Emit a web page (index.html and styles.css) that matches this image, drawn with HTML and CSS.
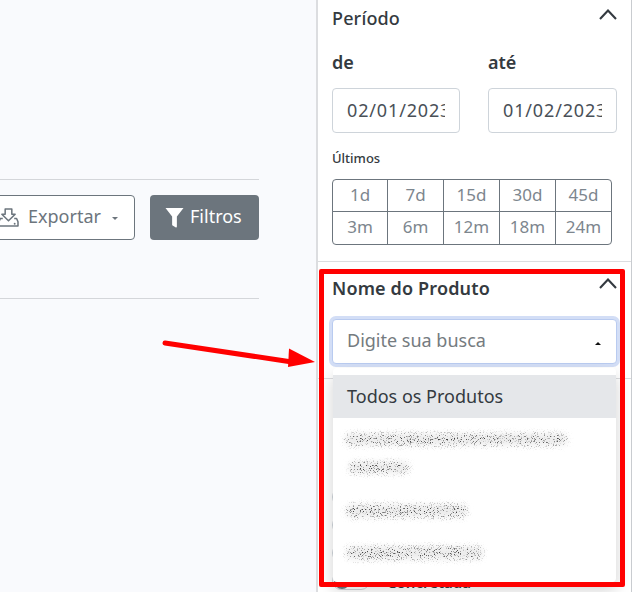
FILE: index.html
```html
<!DOCTYPE html>
<html lang="pt-BR">
<head>
<meta charset="utf-8">
<title>Filtros</title>
<link rel="stylesheet" href="styles.css">
</head>
<body>
<div class="page">
  <main class="main">
    <div class="toolbar">
      <button class="btn btn-outline">
        <svg class="icon" viewBox="0 0 22 20" width="21" height="19"><path d="M7.500 1h7v5.500h3.500L11 13.500 4 6.500h3.500z" fill="none" stroke="#6c757d" stroke-width="1.600" stroke-linejoin="round"/><path d="M5 11H2.500L1 14.500v4.500h20v-4.500L19.500 11H17" fill="none" stroke="#6c757d" stroke-width="1.600" stroke-linejoin="round"/><circle cx="17.500" cy="16.500" r="1" fill="#6c757d"/></svg>
        <span>Exportar</span>
        <i class="caret-down"></i>
      </button>
      <button class="btn btn-solid">
        <svg class="icon" viewBox="0 0 20 22" width="19" height="21"><path d="M0.500 1h19L12.500 10v10.500a1 1 0 0 1-1.500.8L8 19.500a1 1 0 0 1-.5-.8V10z" fill="#fff"/></svg>
        <span>Filtros</span>
      </button>
    </div>
  </main>

  <aside class="sidebar">
    <section class="panel panel-period">
      <header class="panel-head">
        <h2 class="panel-title">Período</h2>
        <svg class="chevron" viewBox="0 0 18 11" width="18" height="11"><path d="M1 10l8-8.500 8 8.500" fill="none" stroke="#343a40" stroke-width="2.100"/></svg>
      </header>
      <div class="dates">
        <label class="date-field"><span class="date-label">de</span><input class="date-input" type="text" value="02/01/2023"></label>
        <label class="date-field"><span class="date-label">até</span><input class="date-input" type="text" value="01/02/2023"></label>
      </div>
      <p class="last-label">Últimos</p>
      <div class="ranges">
        <span class="range">1d</span><span class="range">7d</span><span class="range">15d</span><span class="range">30d</span><span class="range">45d</span>
        <span class="range">3m</span><span class="range">6m</span><span class="range">12m</span><span class="range">18m</span><span class="range">24m</span>
      </div>
    </section>

    <section class="panel panel-product">
      <header class="panel-head">
        <h2 class="panel-title panel-title-strong">Nome do Produto</h2>
        <svg class="chevron" viewBox="0 0 18 11" width="18" height="11"><path d="M1 10l8-8.500 8 8.500" fill="none" stroke="#343a40" stroke-width="2.100"/></svg>
      </header>
      <div class="combo">
        <div class="combo-input">
          <span class="placeholder">Digite sua busca</span>
          <i class="caret-up"></i>
        </div>
        <div class="dropdown">
          <div class="option option-active">Todos os Produtos</div>
          <svg class="blur-rows" viewBox="0 0 283 162" width="283" height="162">
            <defs>
              <filter id="speckle" x="-10%" y="-60%" width="120%" height="220%" color-interpolation-filters="sRGB">
                <feGaussianBlur in="SourceGraphic" stdDeviation="3" result="shape"/>
                <feTurbulence type="fractalNoise" baseFrequency="1.300" numOctaves="1" seed="11" result="noise"/>
                <feColorMatrix in="noise" type="matrix" values="0 0 0 0 0.2  0 0 0 0 0.2  0 0 0 0 0.2  0 0 0 6 -3.350" result="dots"/>
                <feComposite in="dots" in2="shape" operator="in" result="speck"/>
                <feComponentTransfer in="shape" result="haze"><feFuncA type="linear" slope="0.08"/></feComponentTransfer>
                <feMerge><feMergeNode in="haze"/><feMergeNode in="speck"/></feMerge>
              </filter>
            </defs>
            <g filter="url(#speckle)" fill="#000">
              <rect x="12" y="16" width="222" height="11" rx="5"/>
              <rect x="16" y="44" width="60" height="11" rx="5"/>
              <rect x="13" y="87" width="121" height="12" rx="6"/>
              <rect x="13" y="129" width="137" height="12" rx="6"/>
            </g>
          </svg>
        </div>
      </div>
    </section>

    <section class="panel panel-status">
      <div class="switch-row"><i class="switch"></i><span class="switch-text">Aprovada</span></div>
      <div class="switch-row"><i class="switch"></i><span class="switch-text">Pendente</span></div>
      <div class="switch-row"><i class="switch"></i><span class="switch-text">Cancelada</span></div>
      <div class="switch-row"><i class="switch"></i><span class="switch-text">Concretada</span></div>
    </section>
  </aside>

  <div class="highlight"></div>
  <svg class="arrow" viewBox="0 0 170 40" width="170" height="40"><path d="M3 5L130 24" stroke="#f00" stroke-width="5" stroke-linecap="round" fill="none"/><path d="M127 10.500L153 24 126 29z" fill="#f00"/></svg>
</div>
</body>
</html>
```
FILE: styles.css
```css
* { box-sizing: border-box; }
html, body { margin: 0; padding: 0; }
body {
  font-family: "Noto Sans", "Open Sans", sans-serif;
  color: #343a40;
  background: #f9fafd;
}
.page {
  position: relative;
  display: flex;
  width: 632px;
  height: 592px;
  overflow: hidden;
}
.main {
  width: 316px;
  flex: none;
  padding: 179px 57px 0 0;
}
.toolbar {
  display: flex;
  justify-content: flex-end;
  gap: 15px;
  height: 120px;
  padding-top: 15px;
  border-top: 1px solid #d4d6da;
  border-bottom: 1px solid #d4d6da;
}
.btn {
  flex: none;
  display: flex;
  align-items: center;
  height: 45px;
  padding-bottom: 4px;
  border-radius: 4px;
  font: inherit;
  font-size: 18px;
}
.icon {
  flex: none;
  margin-top: 2px;
}
.btn-outline {
  width: 146px;
  padding-left: 8px;
  padding-right: 15px;
  background: #fff;
  border: 1px solid #6c757d;
  color: #6c757d;
  gap: 9px;
}
.btn-solid {
  width: 109px;
  padding-left: 15px;
  padding-right: 15px;
  background: #6c757d;
  border: 0;
  color: #fff;
  gap: 6px;
}
.caret-down {
  margin: 5px 0 0 2px;
  border-top: 3px solid #6c757d;
  border-left: 3px solid transparent;
  border-right: 3px solid transparent;
}
.sidebar {
  flex: 1;
  background: #fff;
  border-left: 2px solid #dcdde0;
  border-right: 1px solid #c9ccd0;
}
.panel { padding: 0 14px; }
.panel-period {
  height: 262px;
  border-bottom: 1px solid #dcdde0;
}
.panel-head {
  display: flex;
  justify-content: space-between;
  align-items: flex-start;
}
.panel-period .panel-head { height: 44px; padding-top: 6px; }
.panel-title {
  margin: 0;
  font-size: 18px;
  line-height: 25px;
  font-weight: 500;
  letter-spacing: .15px;
}
.panel-title-strong { font-weight: 600; }
.chevron { margin-top: 3px; }
.dates {
  display: grid;
  grid-template-columns: 128px 129px;
  column-gap: 28px;
}
.date-field { display: block; }
.date-label {
  display: block;
  height: 44px;
  padding-top: 6px;
  font-size: 18px;
  line-height: 24px;
  font-weight: 600;
}
.date-input {
  display: block;
  width: 100%;
  height: 45px;
  padding: 0 14px 2px;
  border: 1px solid #ced4da;
  border-radius: 4px;
  background: #fff;
  font: inherit;
  font-size: 18px;
  letter-spacing: .85px;
  color: #495057;
}
.last-label {
  margin: 16px 0 0;
  height: 30px;
  font-size: 13px;
  line-height: 18px;
  font-weight: 500;
}
.ranges {
  display: grid;
  grid-template-columns: repeat(5, 56px);
  grid-template-rows: 33px 33px;
  width: 280px;
}
.range {
  display: flex;
  align-items: center;
  justify-content: center;
  margin-left: -1px;
  padding-bottom: 2px;
  border: 1px solid #6c757d;
  font-size: 17px;
  color: #7d868e;
}
.range:nth-child(5n+1) { margin-left: 0; }
.range:nth-child(n+6) { margin-top: -1px; height: 34px; padding-bottom: 3px; }
.range:nth-child(1) { border-top-left-radius: 4px; }
.range:nth-child(5) { border-top-right-radius: 4px; }
.range:nth-child(6) { border-bottom-left-radius: 4px; }
.range:nth-child(10) { border-bottom-right-radius: 4px; }
.panel-product {
  height: 117px;
  border-bottom: 1px solid #dcdde0;
}
.panel-product .panel-head { height: 57px; padding-top: 14px; }
.panel-product .chevron { margin-top: 2px; }
.combo { position: relative; }
.combo-input {
  display: flex;
  align-items: center;
  justify-content: space-between;
  width: 285px;
  height: 45px;
  padding: 0 15px 3px 14px;
  border: 1px solid #b9cbf0;
  border-radius: 4px;
  background: #fff;
  box-shadow: 0 0 0 3px #d3def6;
  font-size: 18px;
  color: #757b80;
}
.caret-up {
  margin: 6px 0 0;
  border-bottom: 3px solid #111;
  border-left: 3px solid transparent;
  border-right: 3px solid transparent;
}
.dropdown {
  position: absolute;
  z-index: 2;
  top: 49px;
  left: 1px;
  width: 283px;
  height: 214px;
  padding-top: 7px;
  background: #fff;
  border-radius: 4px;
  box-shadow: 0 8px 16px rgba(0, 0, 0, .18);
}
.option {
  height: 43px;
  padding: 0 14px;
  font-size: 18px;
  line-height: 43px;
  color: #343a40;
}
.option-active { background: #e5e7ea; }
.blur-rows { display: block; }
.panel-status { padding-top: 104px; }
.switch-row {
  display: flex;
  align-items: center;
  gap: 17px;
  height: 28px;
  font-size: 15px;
  font-weight: 600;
}
.switch-text { margin-top: 1px; line-height: 20px; }
.switch {
  position: relative;
  width: 38px;
  height: 18px;
  border: 1px solid #ced4da;
  border-radius: 9px;
  background: #fff;
}
.switch::before {
  content: "";
  position: absolute;
  top: 0;
  left: 1px;
  width: 16px;
  height: 16px;
  border-radius: 50%;
  background: #6c757d;
}
.highlight {
  position: absolute;
  z-index: 3;
  left: 319px;
  top: 269px;
  width: 306px;
  height: 318px;
  border: 5px solid #f00;
  border-radius: 2px;
}
.arrow {
  position: absolute;
  z-index: 3;
  left: 162px;
  top: 338px;
}
```
